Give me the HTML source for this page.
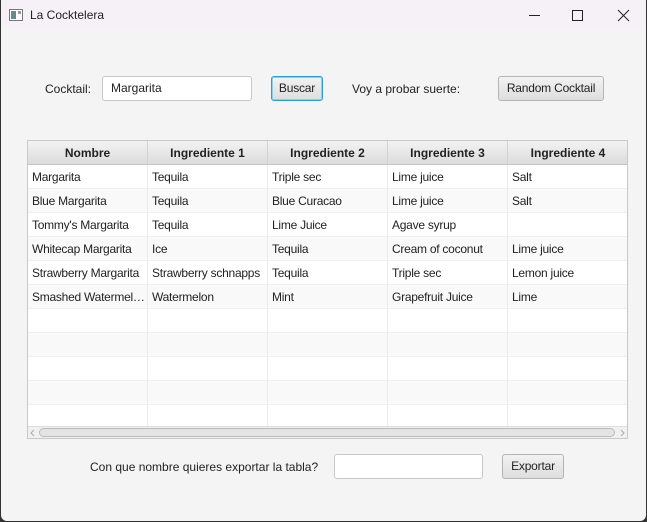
<!DOCTYPE html>
<html><head><meta charset="utf-8"><style>
*{margin:0;padding:0;box-sizing:border-box}
body{width:647px;height:522px;overflow:hidden;background:#333;font-family:"Liberation Sans",sans-serif;font-size:12px;color:#222;position:relative}
.win{position:absolute;left:1px;top:0;width:645px;height:521px;background:#f4f4f4;border-radius:0 0 6px 6px;overflow:hidden}
.title{position:absolute;left:0;top:0;width:645px;height:30px;background:#f5f1f7}
.t{position:absolute;white-space:nowrap}
.btn{position:absolute;height:24px;border:1px solid #b4b4b4;border-radius:3px;background:linear-gradient(#f2f2f2,#dedede);text-align:center;line-height:22px;letter-spacing:-0.2px}
.inp{position:absolute;height:25px;border:1px solid #c8c8c8;border-radius:3px;background:#fff;line-height:23px;padding-left:8px}
.tbl{position:absolute;left:26px;top:140px;width:601px;height:299px;border:1px solid #c8c8c8;background:#fff;overflow:hidden}
.hd{position:absolute;top:0;height:24px;border-right:1px solid #d2d2d2;border-bottom:1px solid #c6c6c6;background:linear-gradient(#f3f3f3,#dcdcdc);font-weight:bold;text-align:center;line-height:24px}
.row{position:absolute;left:0;width:600px;height:24px}
.c{position:absolute;top:0;height:24px;border-right:1px solid #ececec;line-height:24px;padding-left:4px;white-space:nowrap;overflow:hidden;letter-spacing:-0.25px}
.sb{position:absolute;left:0;top:285px;width:600px;height:13px;background:#f0f0f0;border-top:1px solid #ddd}
</style></head><body>
<div class="win">
<div class="title">
<svg style="position:absolute;left:8px;top:9px" width="14" height="12"><rect x="0.5" y="0.5" width="13" height="11" fill="#fff" stroke="#777"/><rect x="2" y="2" width="5" height="8" fill="#6a8a8a"/><rect x="9" y="2" width="3" height="3" fill="#999"/></svg>
<div class="t" style="left:29px;top:8px">La Cocktelera</div>
<svg style="position:absolute;left:525px;top:9px" width="110" height="14" fill="none" stroke="#222" stroke-width="1"><line x1="3" y1="6.5" x2="14" y2="6.5"/><rect x="46.5" y="1.5" width="10" height="10"/><line x1="92" y1="1" x2="103" y2="12"/><line x1="103" y1="1" x2="92" y2="12"/></svg>
</div>
<div class="t" style="left:44px;top:82px">Cocktail:</div>
<div class="inp" style="left:101px;top:76px;width:150px">Margarita</div>
<div class="btn" style="left:270px;top:76px;width:52px;height:25px;border:1px solid #2a9fd6;box-shadow:0 0 0 1px #8fd0ef inset">Buscar</div>
<div class="t" style="left:351px;top:82px">Voy a probar suerte:</div>
<div class="btn" style="left:497px;top:76px;width:106px;height:25px">Random Cocktail</div>
<div class="tbl">
<div class="hd" style="left:0;width:120px">Nombre</div>
<div class="hd" style="left:120px;width:120px">Ingrediente 1</div>
<div class="hd" style="left:240px;width:120px">Ingrediente 2</div>
<div class="hd" style="left:360px;width:120px">Ingrediente 3</div>
<div class="hd" style="left:480px;width:121px">Ingrediente 4</div>
<div id="rows"></div>
<div class="sb"><svg width="600" height="12" style="position:absolute;left:0;top:0"><path d="M6 3 L3 6 L6 9" stroke="#aaa" fill="none"/><path d="M593 3 L596 6 L593 9" stroke="#aaa" fill="none"/><rect x="11.5" y="1.5" width="575" height="8" rx="4" fill="#e4e4e4" stroke="#bbb"/></svg></div>
</div>
<div class="t" style="left:89px;top:460px">Con que nombre quieres exportar la tabla?</div>
<div class="inp" style="left:333px;top:454px;width:149px"></div>
<div class="btn" style="left:501px;top:454px;width:62px;height:25px">Exportar</div>
</div>
<script>
var d=[["Margarita","Tequila","Triple sec","Lime juice","Salt"],["Blue Margarita","Tequila","Blue Curacao","Lime juice","Salt"],["Tommy's Margarita","Tequila","Lime Juice","Agave syrup",""],["Whitecap Margarita","Ice","Tequila","Cream of coconut","Lime juice"],["Strawberry Margarita","Strawberry schnapps","Tequila","Triple sec","Lemon juice"],["Smashed Watermel…","Watermelon","Mint","Grapefruit Juice","Lime"]];
var h="";
for(var i=0;i<11;i++){var r=d[i]||["","","","",""];h+='<div class="row" style="top:'+(24+i*24)+'px;background:'+(i%2?'#f9f9f9':'#fff')+';border-bottom:1px solid #f0f0f0">';for(var j=0;j<5;j++)h+='<div class="c" style="left:'+(j*120)+'px;width:120px">'+r[j]+'</div>';h+='</div>';}
document.getElementById("rows").innerHTML=h;
</script>
</body></html>
